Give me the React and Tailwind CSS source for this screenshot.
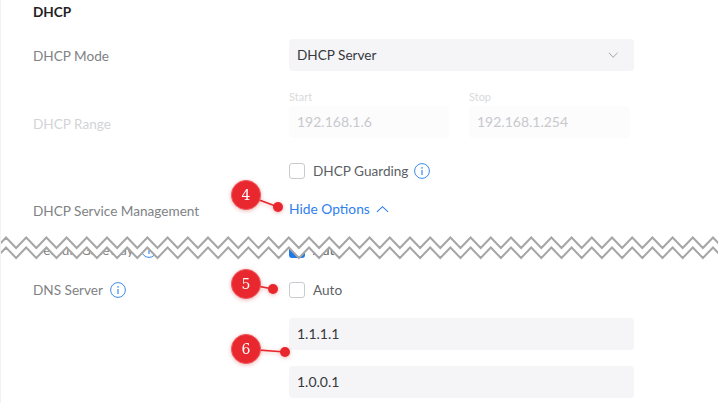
import React from "react";

const Info = ({ className = "" }) => (
  <svg viewBox="0 0 16 16" className={`w-4 h-4 shrink-0 ${className}`} fill="none" stroke="#3b8ae6">
    <circle cx="8" cy="8" r="7.4" strokeWidth="1" />
    <circle cx="8" cy="4.9" r="0.8" fill="#3b8ae6" stroke="none" />
    <path d="M8 7v5" strokeWidth="1.2" />
  </svg>
);

const Row = ({ label, labelClass = "text-[#808285]", className = "", children }) => (
  <div className={`flex items-center ${className}`}>
    <div className={`w-[256px] shrink-0 flex items-center gap-[7px] text-[13.6px] ${labelClass}`}>{label}</div>
    <div className="w-[345px] shrink-0">{children}</div>
  </div>
);

const Check = ({ text, children, className = "" }) => (
  <div className={`flex items-center gap-2 ${className}`}>
    <span className="w-4 h-4 rounded-[3px] border border-[#c9cbcf] bg-white shrink-0" />
    <span className="text-[#5c5f65] text-[13.6px]">{text}</span>
    {children}
  </div>
);

const zig = (y0) => {
  const d = [];
  for (let i = -1; i < 37; i++) {
    d.push(`${5 + i * 20.2},${y0}`);
    d.push(`${15.1 + i * 20.2},${y0 + 10.5}`);
  }
  return d;
};

const Badge = ({ x, y, dx, dy, n }) => (
  <g className="drop-shadow-[0_1px_2px_rgba(200,40,40,0.35)]">
    <line x1={x} y1={y} x2={dx} y2={dy} stroke="#e8262d" strokeWidth="1.6" />
    <circle cx={dx} cy={dy} r="5" fill="#e8262d" />
    <circle cx={x} cy={y} r="14.6" fill="#e8272e" stroke="#ef5d61" strokeWidth="1" />
    <text x={x} y={y + 5} textAnchor="middle" fontSize="14" fill="#fff" fontFamily="'DejaVu Serif', serif">{n}</text>
  </g>
);

export default function App() {
  const z1 = zig(237.5);
  const z2 = zig(247.5);
  return (
    <div className="relative w-[718px] h-[403px] overflow-hidden bg-white border-l border-[#f2f2f2] pl-[32px] text-[14px] leading-5 font-['Lato',sans-serif]">
      <div className="h-[24px] flex items-center font-bold text-[13.6px] text-[#1f2125]">DHCP</div>

      <Row label={<span className="pt-[2px]">DHCP Mode</span>} className="mt-[15px] h-[32px]">
        <div className="h-[32px] rounded bg-[#f5f5f7] pl-2 pr-[15px] flex items-center justify-between text-[#36383d] text-[13.6px]">
          <span>DHCP Server</span>
          <svg viewBox="0 0 12 8" className="w-[11px] h-[8px]" fill="none" stroke="#9a9ca1" strokeWidth="1">
            <path d="M1 1.5l4.5 5 5-5" />
          </svg>
        </div>
      </Row>

      <Row label="DHCP Range" labelClass="text-[#d3d4d6] pt-[20px]" className="mt-[18px]">
        <div className="flex gap-[20px]">
          <div className="w-[160px]">
            <div className="text-[11px] leading-4 text-[#d9dadc]">Start</div>
            <div className="mt-[1px] h-[32px] rounded bg-[#fcfcfd] pl-2 flex items-center text-[#c8c9cc]">192.168.1.6</div>
          </div>
          <div className="w-[161px]">
            <div className="text-[11px] leading-4 text-[#d9dadc]">Stop</div>
            <div className="mt-[1px] h-[32px] rounded bg-[#fcfcfd] pl-2 flex items-center text-[#c8c9cc]">192.168.1.254</div>
          </div>
        </div>
      </Row>

      <Row label="" className="mt-[25px] h-[16px]">
        <Check text="DHCP Guarding"><Info className="-ml-[2px]" /></Check>
      </Row>

      <Row label="DHCP Service Management" className="mt-[22px] h-[20px]">
        <div className="flex items-center gap-[6px] text-[#2f80ed] text-[13.8px] -mt-[5px]">
          <span>Hide Options</span>
          <svg viewBox="0 0 14 8" className="w-[13px] h-[8px]" fill="none" stroke="#2f80ed" strokeWidth="1.2">
            <path d="M1 7l6-5.5L13 7" />
          </svg>
        </div>
      </Row>

      <Row
        label={<><span className="text-[#808285]">Default Gateway</span><Info /></>}
        className="mt-[19px] h-[20px]"
      >
        <div className="flex items-center gap-2">
          <span className="w-4 h-4 rounded-[3px] bg-[#1f7ae8] shrink-0" />
          <span className="text-[#5c5f65] text-[13.6px]">Auto</span>
        </div>
      </Row>

      <Row label={<><span>DNS Server</span><Info /></>} className="mt-[20px] h-[20px]">
        <Check text="Auto" />
      </Row>

      <Row label="" className="mt-[18px] h-[32px]">
        <div className="h-[32px] rounded bg-[#f5f5f7] pl-2 flex items-center text-[#36383d]">1.1.1.1</div>
      </Row>
      <Row label="" className="mt-[16px] h-[32px]">
        <div className="h-[32px] rounded bg-[#f5f5f7] pl-2 flex items-center text-[#36383d]">1.0.0.1</div>
      </Row>

      <svg className="absolute left-0 top-0 w-[718px] h-[403px] pointer-events-none" viewBox="0 0 718 403">
        <path d={`M-30,225 L760,225 L760,${247.5} L${[...z2].reverse().join(" L")} L-30,247.5 Z`} fill="#fff" stroke="none" />
        <polyline points={z1.join(" ")} fill="none" stroke="#a6a6a6" strokeWidth="2" />
        <polyline points={z2.join(" ")} fill="none" stroke="#a6a6a6" strokeWidth="2" />
        <Badge x={245} y={195} dx={277} dy={207} n="4" />
        <Badge x={245} y={284} dx={272} dy={289} n="5" />
        <Badge x={245} y={349} dx={284} dy={352} n="6" />
      </svg>
    </div>
  );
}
